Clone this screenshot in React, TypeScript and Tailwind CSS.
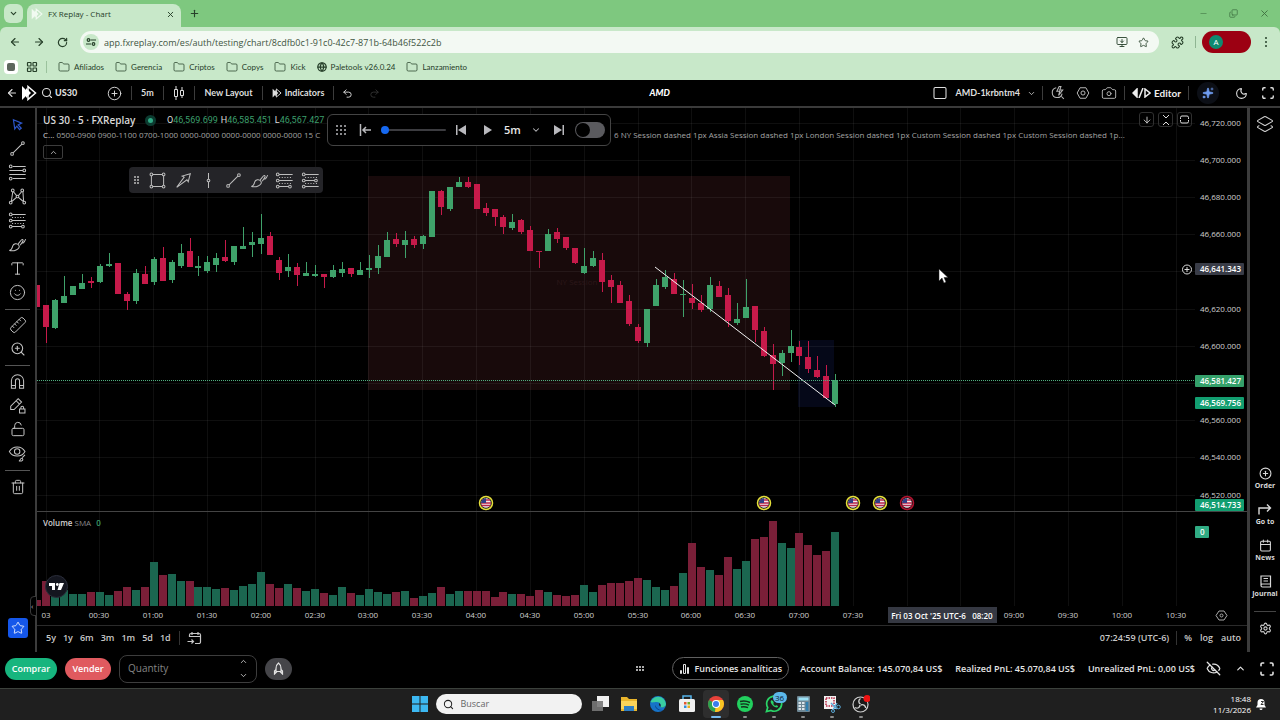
import type { ReactNode } from "react";
import {
  ArrowDown,
  ArrowLeft,
  ArrowRight,
  Calendar,
  Camera,
  ChevronDown,
  ChevronUp,
  CirclePlus,
  EyeOff,
  Folder,
  Globe,
  Layers2,
  LayoutGrid,
  LockOpen,
  Minus,
  Moon,
  MonitorDown,
  Plus,
  Puzzle,
  Redo2,
  RotateCw,
  Ruler,
  Scan,
  Search,
  Settings,
  Smile,
  Sparkles,
  Square,
  Star,
  Trash2,
  Type,
  Undo2,
  X,
  ZoomIn,
  Copy,
} from "lucide-react";

type Side = "g" | "r";
// side, high, body top, body bottom, low, top of the volume bar
type Candle = [Side, number, number, number, number, number];

const CANDLES: Candle[] = [
  ["r", 285, 285, 307, 307, 600],
  ["r", 305, 305, 327, 343, 581],
  ["g", 299, 300, 328, 329, 588],
  ["g", 276, 296, 303, 303, 590],
  ["g", 286, 286, 295, 295, 594],
  ["g", 274, 283, 289, 289, 594],
  ["r", 277, 281, 283, 288, 592],
  ["g", 264, 266, 282, 283, 592],
  ["g", 253, 264, 266, 267, 595],
  ["r", 263, 263, 294, 294, 591],
  ["r", 292, 294, 301, 310, 587],
  ["g", 269, 273, 301, 304, 590],
  ["r", 266, 274, 284, 284, 587],
  ["g", 257, 259, 282, 285, 562],
  ["r", 247, 258, 281, 281, 575],
  ["g", 260, 262, 280, 283, 574],
  ["g", 244, 253, 266, 268, 581],
  ["r", 238, 251, 267, 267, 581],
  ["g", 256, 266, 268, 276, 587],
  ["g", 256, 262, 271, 273, 587],
  ["g", 253, 258, 265, 272, 589],
  ["r", 240, 257, 261, 262, 588],
  ["g", 246, 246, 262, 265, 590],
  ["g", 227, 246, 249, 249, 586],
  ["g", 232, 242, 245, 257, 584],
  ["g", 214, 238, 244, 254, 572],
  ["r", 232, 236, 255, 255, 584],
  ["r", 257, 260, 273, 280, 588],
  ["g", 254, 267, 271, 277, 584],
  ["r", 263, 267, 275, 286, 588],
  ["g", 262, 273, 276, 276, 591],
  ["g", 265, 274, 276, 277, 589],
  ["r", 274, 274, 277, 288, 593],
  ["g", 265, 270, 277, 278, 595],
  ["g", 262, 269, 273, 277, 587],
  ["r", 268, 268, 274, 277, 593],
  ["g", 262, 270, 275, 275, 595],
  ["g", 255, 268, 270, 278, 589],
  ["g", 245, 256, 268, 274, 592],
  ["g", 232, 240, 257, 257, 594],
  ["r", 233, 239, 244, 247, 592],
  ["g", 231, 240, 245, 258, 591],
  ["r", 236, 239, 245, 248, 598],
  ["g", 235, 236, 244, 249, 596],
  ["g", 191, 191, 237, 237, 593],
  ["r", 190, 191, 207, 215, 587],
  ["g", 187, 187, 209, 211, 594],
  ["g", 177, 182, 187, 187, 591],
  ["r", 177, 182, 187, 188, 591],
  ["r", 184, 184, 209, 209, 591],
  ["r", 203, 208, 213, 216, 591],
  ["r", 209, 209, 217, 226, 597],
  ["r", 215, 217, 227, 234, 592],
  ["g", 214, 222, 228, 230, 594],
  ["r", 219, 220, 232, 234, 594],
  ["r", 226, 230, 251, 251, 596],
  ["r", 251, 251, 252, 268, 590],
  ["g", 229, 234, 251, 251, 592],
  ["r", 228, 232, 239, 243, 595],
  ["r", 237, 237, 248, 250, 596],
  ["r", 248, 248, 263, 264, 595],
  ["g", 248, 266, 273, 274, 585],
  ["g", 251, 258, 266, 267, 592],
  ["r", 253, 260, 282, 292, 585],
  ["r", 275, 280, 287, 303, 583],
  ["r", 281, 285, 303, 303, 583],
  ["r", 295, 301, 324, 326, 581],
  ["r", 324, 327, 341, 343, 578],
  ["g", 309, 309, 343, 347, 580],
  ["g", 279, 285, 306, 306, 587],
  ["g", 270, 277, 287, 289, 590],
  ["r", 273, 279, 294, 294, 586],
  ["g", 280, 294, 295, 317, 573],
  ["r", 284, 298, 303, 309, 543],
  ["r", 295, 303, 310, 312, 567],
  ["g", 277, 285, 309, 312, 570],
  ["r", 281, 286, 297, 297, 575],
  ["r", 288, 295, 321, 327, 557],
  ["g", 303, 319, 323, 325, 569],
  ["g", 279, 307, 318, 318, 561],
  ["r", 306, 306, 330, 342, 539],
  ["r", 327, 331, 356, 357, 537],
  ["r", 344, 355, 364, 390, 521],
  ["g", 350, 353, 363, 376, 543],
  ["g", 330, 346, 353, 362, 548],
  ["r", 341, 347, 356, 365, 533],
  ["r", 341, 357, 369, 373, 545],
  ["r", 356, 370, 377, 378, 555],
  ["r", 365, 376, 398, 399, 551],
  ["g", 374, 380, 404, 407, 532],
];

const STEP = 8.97;
// an empty label keeps its grid line: a badge sits over it
const TIMES = [
  "03", "00:30", "01:00", "01:30", "02:00", "02:30", "03:00", "03:30", "04:00", "04:30", "05:00",
  "05:30", "06:00", "06:30", "07:00", "07:30", "", "", "09:00", "09:30", "10:00", "10:30",
];
const PRICES = [
  "46,720.000", "46,700.000", "46,680.000", "46,660.000", "", "46,620.000", "46,600.000", "",
  "46,560.000", "46,540.000", "46,520.000",
];
const EVENTS: [number, string][] = [
  [486, "#e6e03a"],
  [764, "#e6e03a"],
  [853, "#e6e03a"],
  [880, "#e6e03a"],
  [907, "#b3122f"],
];

const priceY = (i: number) => Math.floor(123 + i * 37.2);
const timeX = (i: number) => Math.floor(46 + i * STEP * 6);

/* ---------- icons ---------- */

function ToolIcon({ children, size = 19 }: { children: ReactNode; size?: number }) {
  return (
    <svg width={size} height={size} viewBox="0 0 28 28" fill="none" stroke="currentColor" strokeWidth="1.5">
      {children}
    </svg>
  );
}

const CursorIcon = () => (
  <ToolIcon>
    <path d="M8 7l12 5-5 2.500 4.500 5-2.500 2-4-5-3 4z" strokeWidth="1.800" />
  </ToolIcon>
);
const TrendIcon = () => (
  <ToolIcon>
    <path d="M7.500 20.500l13-13" />
    <circle cx="6" cy="22" r="2" />
    <circle cx="22" cy="6" r="2" />
  </ToolIcon>
);
const FibIcon = () => (
  <ToolIcon>
    <path d="M7 5h19M2 11h20M2 17h24M7 23h19" />
    <circle cx="4" cy="5" r="2" />
    <circle cx="24" cy="11" r="2" />
    <circle cx="4" cy="23" r="2" />
  </ToolIcon>
);
const PatternIcon = () => (
  <ToolIcon>
    <path d="M7 7l-2 14M8 7l5 6M15 13l5-6M22 7l1 14M6 21l7-6M15 15l7 6" />
    <circle cx="7" cy="5" r="2" />
    <circle cx="21" cy="5" r="2" />
    <circle cx="14" cy="14" r="2" />
    <circle cx="4" cy="23" r="2" />
    <circle cx="24" cy="23" r="2" />
  </ToolIcon>
);
const PositionIcon = ({ short }: { short?: boolean }) => (
  <ToolIcon>
    <path d={short ? "M6 5h20M6 14h14M6 23h20" : "M6 5h20M6 14h20M6 23h14"} />
    <path d="M6 9.500h20M6 18.500h20" strokeDasharray="1.500 2.500" />
    <circle cx="4" cy="5" r="2" />
    <circle cx="4" cy="14" r="2" />
    <circle cx="22" cy={short ? 14 : 23} r="2" />
    <circle cx="4" cy="23" r="2" />
  </ToolIcon>
);
const BrushIcon = () => (
  <ToolIcon>
    <path d="M2 23c4-1 4-3 5-7 1-3 6-5 9-1 2 3-1 6-4 7-3 1.500-7 1.500-10 1z" />
    <path d="M15 13l5-6c1-1.500 3 .5 2 2l-4 6M20 11c2 2 4 0 6-5" />
  </ToolIcon>
);
const RectIcon = () => (
  <ToolIcon>
    <path d="M7 5h14M7 23h14M5 7v14M23 7v14" />
    <circle cx="5" cy="5" r="2" />
    <circle cx="23" cy="5" r="2" />
    <circle cx="5" cy="23" r="2" />
    <circle cx="23" cy="23" r="2" />
  </ToolIcon>
);
const ArrowMarkIcon = () => (
  <ToolIcon>
    <path d="M4 24L15 9l-3-1.500L24 4l-3 12-2-3z" />
  </ToolIcon>
);
const VerticalIcon = () => (
  <ToolIcon>
    <path d="M14 3v9M14 16v9" />
    <circle cx="14" cy="14" r="2" />
  </ToolIcon>
);
const MagnetIcon = () => (
  <ToolIcon>
    <path d="M5 24V13a9 9 0 0 1 18 0v11h-6V13a3 3 0 0 0-6 0v11zM5 20h6M17 20h6" />
  </ToolIcon>
);
const PencilLockIcon = () => (
  <ToolIcon>
    <path d="M4 20v-5L15 4l5 5-11 11zM12 7l5 5" />
    <path d="M17 19h8v6h-8zM19 19v-2a2 2 0 0 1 4 0v2" />
  </ToolIcon>
);
const EyeBrushIcon = () => (
  <ToolIcon>
    <path d="M2 11c5-9 18-9 23 0-5 9-18 9-23 0z" />
    <circle cx="13.500" cy="11" r="4" />
    <path d="M16 25c2 0 2-4 4-4s3 3 0 4zM21 20l4-4" />
  </ToolIcon>
);
const GoToDateIcon = () => (
  <svg width="15" height="15" viewBox="0 0 15 15" fill="none" stroke="currentColor" strokeWidth="1.200">
    <path d="M2.500 6V4a1.500 1.500 0 0 1 1.500-1.500h8A1.500 1.500 0 0 1 13.500 4v7a1.500 1.500 0 0 1-1.500 1.500H8M2.500 5.500h11M5 1v3M11 1v3M.5 10.500h6M4.500 8.500l2 2-2 2" />
  </svg>
);
const RocketIcon = () => (
  <svg width="11" height="13" viewBox="0 0 11 13" fill="none" stroke="currentColor" strokeWidth="1.200">
    <path d="M5.500 1C3.500 2.500 3 4.500 3 6.500V9.500h5v-3C8 4.500 7.500 2.500 5.500 1zM3 7.500L1.500 9v3L4 9.500M8 7.500L9.500 9v3L7 9.500" />
  </svg>
);
const NotesIcon = () => (
  <svg width="13" height="13" viewBox="0 0 13 13" fill="none" stroke="currentColor" strokeWidth="1.200">
    <path d="M2 1h9.500v11H3.500A1.500 1.500 0 0 1 2 10.500zM2 10.500A1.500 1.500 0 0 1 3.500 9h8M4.500 3.500h4.500M4.500 6h4.500" />
  </svg>
);
const GoToIcon = () => (
  <svg width="14" height="13" viewBox="0 0 14 13" fill="none" stroke="currentColor" strokeWidth="1.400">
    <path d="M1 11.500V5h11.500M9 1.500L12.500 5 9 8.500" />
  </svg>
);
const BarsIcon = () => (
  <svg width="11" height="10" viewBox="0 0 11 10" fill="none" stroke="currentColor">
    <path d="M1.500 6.500h1v3h-1zM4.500 .5h2v9h-2zM8.500 3.500h1v6h-1z" />
  </svg>
);
const TwoCandlesIcon = () => (
  <svg width="12" height="14" viewBox="0 0 12 14" fill="none" stroke="currentColor">
    <path d="M3 0v3M3 11v3M9 1v3M9 10v2M1.500 3.500h3v7h-3zM7.500 4.500h3v5h-3z" />
  </svg>
);
const ReplayLogo = ({ size }: { size: number }) => (
  <svg width={size} height={size} viewBox="0 0 16 16">
    <path d="M1 1l7 7-7 7z" fill="currentColor" />
    <path d="M7 1.500L14.500 8 7 14.500V9l1-1-1-1z" fill="none" stroke="currentColor" strokeWidth="1.500" />
    <path d="M5 3l5 5-5 5z" fill="currentColor" />
  </svg>
);
const Grip = ({ cols, rows, gap, className }: { cols: number; rows: number; gap: number; className?: string }) => (
  <svg width={(cols - 1) * gap + 2} height={(rows - 1) * gap + 2} className={className} fill="currentColor">
    {Array.from({ length: cols * rows }, (_, i) => (
      <rect key={i} x={(i % cols) * gap} y={Math.floor(i / cols) * gap} width="2" height="2" rx="1" />
    ))}
  </svg>
);
const HexDot = ({ size }: { size: number }) => (
  <svg width={size} height={size} viewBox="0 0 24 24" fill="none" stroke="currentColor" strokeWidth="1.700">
    <path d="M7 3h10l5 9-5 9H7l-5-9z" />
    <circle cx="12" cy="12" r="3.500" />
  </svg>
);

/* ---------- browser ---------- */

function Bookmark({ name, globe }: { name: string; globe?: boolean }) {
  return (
    <a href="#" className="flex items-center gap-[4px]">
      {globe ? <Globe size={10} strokeWidth={3} /> : <Folder size={12} strokeWidth={1.5} />}
      {name}
    </a>
  );
}

function Browser() {
  return (
    <header className="bg-[#7ec87f] text-[#27402a]">
      <div className="flex h-[27px] items-end">
        <button aria-label="Search tabs" className="mb-[4px] ml-[4px] flex h-[19px] w-[19px] items-center justify-center rounded-md bg-[#c8e8c9]">
          <ChevronDown size={9} strokeWidth={3} />
        </button>
        <div className="ml-1 flex h-[23px] w-[154px] items-center rounded-t-lg bg-[#c8e8c9] pr-[6px] pb-[3px] pl-[4px]">
          <span className="text-[#f1faf1]">
            <ReplayLogo size={12} />
          </span>
          <span className="ml-[5px] flex-1 text-[8px]">FX Replay - Chart</span>
          <button aria-label="Close tab">
            <X size={9} strokeWidth={2.5} />
          </button>
        </div>
        <button aria-label="New tab" className="mb-[8px] ml-[8px]">
          <Plus size={11} strokeWidth={2.5} />
        </button>
        <div className="mb-[8px] ml-auto flex gap-[21px] pr-[10px] text-[#3f7041]">
          <button aria-label="Minimize"><Minus size={9} strokeWidth={1.5} /></button>
          <button aria-label="Restore"><Copy size={9} strokeWidth={2} className="-scale-x-100 rotate-180" /></button>
          <button aria-label="Close"><X size={11} strokeWidth={2} /></button>
        </div>
      </div>

      <div className="rounded-t-md bg-[#c8e8c9]">
        <div className="flex h-[30px] items-center">
          <div className="flex w-[80px] items-center gap-[12px] pl-[9px]">
            <button aria-label="Back"><ArrowLeft size={12} strokeWidth={2.3} /></button>
            <button aria-label="Forward"><ArrowRight size={12} strokeWidth={2.3} /></button>
            <button aria-label="Reload"><RotateCw size={11} strokeWidth={2.6} /></button>
          </div>
          <div className="flex h-[22px] flex-1 items-center rounded-full bg-[#f3f9f3] pr-[10px] pl-[3px]">
            <span className="flex h-4 w-4 items-center justify-center rounded-full bg-[#c8e8c9]">
              <svg width="10" height="8" viewBox="0 0 10 8" fill="none" stroke="currentColor" strokeWidth="1.200">
                <path d="M4.500 2H10M0 6h5" />
                <circle cx="2.500" cy="2" r="1.300" />
                <circle cx="7.500" cy="6" r="1.300" />
              </svg>
            </span>
            <input
              aria-label="Address"
              defaultValue="app.fxreplay.com/es/auth/testing/chart/8cdfb0c1-91c0-42c7-871b-64b46f522c2b"
              className="ml-[5px] h-full flex-1 bg-transparent text-[9px] text-[#3f5542] outline-none"
            />
            <MonitorDown size={12} strokeWidth={1.8} />
            <Star size={11} strokeWidth={1.8} className="ml-[10px]" />
          </div>
          <Puzzle size={13} strokeWidth={2} className="ml-[12px]" />
          <span className="ml-[11px] h-3 w-px bg-[#8fb592]" />
          <button aria-label="Profile" className="ml-[6px] flex h-[22px] w-[49px] items-center rounded-full bg-[#9c0012] pl-[7px]">
            <span className="flex h-[14px] w-[14px] items-center justify-center rounded-full bg-[#0f8a70] text-[8px] text-white">A</span>
          </button>
          <button aria-label="Menu" className="mr-[13px] ml-[14px]">
            <Grip cols={1} rows={3} gap={4} />
          </button>
        </div>
        <nav className="flex h-[23px] items-center gap-[11px] pb-[4px] pl-[4px] font-[Lato,'Open_Sans',sans-serif] text-[8px]">
          <span className="flex h-[14px] w-[14px] items-center justify-center rounded bg-white">
            <span className="h-2 w-2 rounded-[2px] bg-[#5c665d]" />
          </span>
          <LayoutGrid size={12} strokeWidth={2.4} className="-ml-[3px]" />
          <span className="-ml-[3px] h-3 w-px bg-[#9bc29d]" />
          <Bookmark name="Afiliados" />
          <Bookmark name="Gerencia" />
          <Bookmark name="Criptos" />
          <Bookmark name="Copys" />
          <Bookmark name="Kick" />
          <Bookmark name="Paletools v26.0.24" globe />
          <Bookmark name="Lanzamiento" />
        </nav>
      </div>
    </header>
  );
}

/* ---------- app top bar ---------- */

const Divider = ({ className = "bg-[#3c3c3c]" }: { className?: string }) => (
  <span className={`h-[14px] w-px shrink-0 ${className}`} />
);

function TopBar() {
  return (
    <div className="flex h-[28px] shrink-0 items-center border-b-2 border-[#3a3a3a] font-[Lato,'Open_Sans',sans-serif] text-[9px] font-bold text-[#dedede]">
      <div className="flex w-[131px] items-center pr-[9px] pl-[6px]">
        <button aria-label="Back"><ArrowLeft size={12} strokeWidth={2.2} /></button>
        <span className="ml-[3px] text-white"><ReplayLogo size={16} /></span>
        <button className="ml-[4px] flex items-center gap-[2px] font-black">
          <Search size={12} strokeWidth={2.2} />
          US30
        </button>
        <button aria-label="Compare" className="ml-auto"><CirclePlus size={15} strokeWidth={1.5} /></button>
      </div>
      <Divider />
      <button className="w-[31px]">5m</button>
      <Divider />
      <button aria-label="Chart type" className="flex w-[30px] justify-center"><TwoCandlesIcon /></button>
      <Divider />
      <button className="w-[67px]">New Layout</button>
      <Divider />
      <button className="flex w-[70px] items-center justify-center gap-[3px]">
        <ReplayLogo size={10} />
        Indicators
      </button>
      <Divider />
      <button aria-label="Undo" className="flex w-[27px] justify-center"><Undo2 size={11} /></button>
      <button aria-label="Redo" className="flex w-[26px] justify-center text-[#333]"><Redo2 size={11} /></button>

      <span className="flex-1 text-center font-black text-white italic">AMD</span>

      <button className="flex items-center gap-[7px] pr-[6px]">
        <Square size={16} strokeWidth={1.6} className="scale-y-90" />
        AMD-1krbntm4
        <ChevronDown size={9} />
      </button>
      <Divider />
      <div className="flex w-[81px] items-center justify-center gap-[11px] text-[#b8b8b8]">
        <button aria-label="Quick search">
          <svg width="14" height="14" viewBox="0 0 24 24" fill="none" stroke="currentColor" strokeWidth="1.800">
            <path d="M9 3a8.500 8.500 0 1 0 10 10M18 18l4 4M14 1l-4 8h5l-2 7 7-9h-5l2-6z" />
          </svg>
        </button>
        <button aria-label="Chart settings"><HexDot size={14} /></button>
        <button aria-label="Snapshot"><Camera size={16} strokeWidth={1.4} /></button>
      </div>
      <Divider />
      <button className="flex w-[63px] items-center justify-center gap-[3px] text-[10px] text-[#eee]">
        <svg width="19" height="10" viewBox="0 0 19 10" fill="none" stroke="currentColor" strokeWidth="1.500">
          <path d="M5 1v8L1 5z" fill="currentColor" />
          <path d="M11 0L7 10M13 1v8l5-4z" />
        </svg>
        Editor
      </button>
      <Divider />
      <div className="flex w-[91px] items-center pl-[8px]">
        <button aria-label="Assistant" className="flex h-[22px] w-[22px] items-center justify-center rounded-full bg-[#0c0f16] text-[#6f9cf0]">
          <Sparkles size={12} fill="currentColor" strokeWidth={1.5} />
        </button>
        <button aria-label="Theme" className="ml-[16px]"><Moon size={13} strokeWidth={2} /></button>
        <button aria-label="Fullscreen" className="ml-[13px]"><Scan size={14} strokeWidth={2.4} /></button>
      </div>
    </div>
  );
}

/* ---------- side rails ---------- */

function Tool({ label, children, active }: { label: string; children: ReactNode; active?: boolean }) {
  return (
    <button
      aria-label={label}
      className={`flex h-6 w-full items-center justify-center ${active ? "text-[#2c55c8]" : "text-[#c4c4c4]"}`}
    >
      {children}
    </button>
  );
}

function LeftRail() {
  return (
    <aside className="relative flex w-[35px] shrink-0 flex-col items-center pt-[4px]">
      <Tool label="Cursor" active><CursorIcon /></Tool>
      <Tool label="Trend line"><TrendIcon /></Tool>
      <Tool label="Fibonacci"><FibIcon /></Tool>
      <Tool label="Patterns"><PatternIcon /></Tool>
      <Tool label="Positions"><PositionIcon /></Tool>
      <Tool label="Brush"><BrushIcon /></Tool>
      <Tool label="Text"><Type size={17} strokeWidth={1.4} /></Tool>
      <Tool label="Emoji"><Smile size={17} strokeWidth={1.4} /></Tool>
      <span className="mt-[5px] mb-[3px] h-px w-[25px] bg-[#555]" />
      <Tool label="Measure"><Ruler size={18} strokeWidth={1.3} className="-scale-x-100" /></Tool>
      <Tool label="Zoom"><ZoomIn size={16} strokeWidth={1.6} /></Tool>
      <span className="mt-[4px] mb-[3px] h-px w-[25px] bg-[#555]" />
      <Tool label="Magnet"><MagnetIcon /></Tool>
      <Tool label="Keep drawing"><PencilLockIcon /></Tool>
      <Tool label="Lock"><LockOpen size={16} strokeWidth={1.5} /></Tool>
      <Tool label="Hide"><EyeBrushIcon /></Tool>
      <span className="mt-[5px] mb-[4px] h-px w-[25px] bg-[#555]" />
      <Tool label="Delete"><Trash2 size={16} strokeWidth={1.5} /></Tool>
      <button aria-label="Favorites" className="mt-auto mb-[14px] flex h-5 w-5 items-center justify-center rounded-[3px] bg-[#1557ea] text-white">
        <Star size={14} strokeWidth={1.4} />
      </button>
      <button aria-label="Collapse" className="absolute top-[488px] right-[-2px] flex h-5 w-[7px] items-center rounded-l border border-[#3a3a3a] bg-black text-[8px] text-[#bbb]">
        ‹
      </button>
    </aside>
  );
}

function RailItem({ label, children }: { label: string; children: ReactNode }) {
  return (
    <button className="flex h-9 flex-col items-center gap-px text-[7px] leading-[10px] font-bold text-[#d8d8d8]">
      {children}
      {label}
    </button>
  );
}

function RightRail() {
  return (
    <aside className="flex w-[30px] shrink-0 flex-col items-center text-[#d0d0d0]">
      <button aria-label="Layers" className="mt-[7px]"><Layers2 size={18} strokeWidth={1.4} /></button>
      <div className="mt-auto flex flex-col items-center">
        <RailItem label="Order"><CirclePlus size={13} /></RailItem>
        <RailItem label="Go to"><GoToIcon /></RailItem>
        <RailItem label="News"><Calendar size={13} /></RailItem>
        <RailItem label="Journal"><NotesIcon /></RailItem>
      </div>
      <span className="h-px w-[22px] bg-[#444]" />
      <button aria-label="Settings" className="mt-[10px] mb-[17px]"><Settings size={13} /></button>
    </aside>
  );
}

/* ---------- chart ---------- */

function Flag({ x, ring }: { x: number; ring: string }) {
  return (
    <g transform={`translate(${x} 503)`}>
      <circle r="6.500" fill="#111" stroke={ring} strokeWidth="1.500" />
      <circle r="4.800" fill="#f2e9ee" />
      <path d="M-4 -3h8M-5 0h10M-4.500 2.500h9" stroke="#b8254a" strokeWidth="1.300" />
      <path d="M-4.800 0A4.800 4.800 0 0 1 0 -4.800V0z" fill="#2f3f86" />
    </g>
  );
}

function Plot() {
  return (
    <svg className="h-[517px] min-w-0 flex-1" aria-label="US 30 five minute chart">
      {/* all coordinates below are window ones */}
      <g transform="translate(-37 -108)">
        <g shapeRendering="crispEdges">
          <rect x="368" y="176" width="422" height="214" fill="#180a0b" />
          <rect x="798" y="340" width="36" height="67" fill="#050818" />
          {PRICES.map((_, i) => (
            <rect key={i} x="37" y={priceY(i)} width="100%" height="1" fill="#fff" opacity="0.060" />
          ))}
          {TIMES.map((_, i) => (
            <rect key={i} x={timeX(i)} y="108" width="1" height="498" fill="#fff" opacity="0.060" />
          ))}
        </g>
        <text x="577" y="285" textAnchor="middle" fontSize="8" fill="#2c1719">NY Session</text>

        <g shapeRendering="crispEdges">
          {CANDLES.map(([side, high, top, bottom, low, vol], i) => {
            const x = Math.round(46 + (i - 1) * STEP);
            return (
              <g key={i}>
                <rect x={x - 4} y={vol} width="8" height={606 - vol} fill={side === "g" ? "#1b6650" : "#7a1f38"} />
                <g fill={side === "g" ? "#3fa26a" : "#c61a4a"}>
                  <rect x={x} y={high} width="1" height={low - high} />
                  <rect x={x - 3} y={top} width="6" height={bottom - top} />
                </g>
              </g>
            );
          })}
        </g>
        <path d="M655 267L835 405" stroke="#f2f2f2" strokeWidth="1" />
        <path d="M37 380.500h1200" stroke="#4fae7e" strokeDasharray="1 1" />
        <rect x="37" y="511" width="100%" height="1" fill="#444" />
        {EVENTS.map(([x, ring]) => (
          <Flag key={x} x={x} ring={ring} />
        ))}
        <circle cx="56.500" cy="586.500" r="11" fill="#14161f" stroke="#2a2d3a" />
        <path d="M49 583h6v7h-3v-4h-3zM59.500 583h4.500l-3 7h-3.500z" fill="#fff" />
        <circle cx="57.300" cy="584.500" r="1.400" fill="#fff" />

        <g fontSize="8" fill="#d0d0d0" textAnchor="middle">
          {TIMES.map((t, i) => t && <text key={t} x={timeX(i)} y="618">{t}</text>)}
        </g>
        <rect x="888" y="607" width="109" height="16" fill="#353842" />
        <text x="942" y="619" textAnchor="middle" fontSize="8" fontWeight="600" fill="#fff" xmlSpace="preserve">
          {"Fri 03 Oct '25 UTC-6   08:20"}
        </text>
        <path d="M939 269v12l3-3 2 5 2-1-2-4.500h4z" fill="#fff" stroke="#222" strokeWidth=".5" />
      </g>
    </svg>
  );
}

function PriceTag({ y, text, fill, width = 49 }: { y: number; text: string; fill: string; width?: number }) {
  return (
    <g>
      <rect x="0" y={y - 6} width={width} height="12" rx="1" fill={fill} />
      <text x={5} y={y + 3} fill="#fff" fontWeight="600">{text}</text>
    </g>
  );
}

function PriceAxis() {
  return (
    <svg className="h-[517px] w-[52px] shrink-0 overflow-visible" fontSize="8">
      <g transform="translate(0 -108)">
        {PRICES.map((p, i) => p && <text key={p} x="5" y={priceY(i) + 3} fill="#d0d0d0">{p}</text>)}
        <circle cx="-8" cy="269.500" r="4.500" fill="none" stroke="#ddd" />
        <path d="M-10.500 269.500h5M-8 267v5" stroke="#ddd" />
        <PriceTag y={269} text="46,641.343" fill="#393c47" />
        <PriceTag y={381} text="46,581.427" fill="#34a06a" />
        <PriceTag y={403} text="46,569.756" fill="#129e70" />
        <rect x="0" y="511" width="52" height="1" fill="#444" />
        <PriceTag y={505} text="46,514.733" fill="#129e70" />
        <PriceTag y={532} text="0" fill="#30ac84" width={14} />
        <g transform="translate(21 610)" fill="none" stroke="#aaa">
          <path d="M3 1h5l3 4.500L8 10H3L0 5.500z" />
          <circle cx="5.500" cy="5.500" r="1.500" />
        </g>
      </g>
    </svg>
  );
}

const Ohlc = ({ k, v }: { k: string; v?: string }) => (
  <span className="text-[#dcdcdc]">
    {k}
    <span className="text-[#3c9f6c]">{v}</span>
  </span>
);

function Legend() {
  return (
    <div className="absolute top-[5px] left-[6px] text-[#d8d8d8]">
      <div className="flex h-[14px] items-center whitespace-nowrap">
        <h1 className="w-[102px] text-[10px] font-semibold">US 30 · 5 · FXReplay</h1>
        <span className="mr-[11px] flex h-[11px] w-[11px] items-center justify-center rounded-full bg-[#0c3b30]">
          <span className="h-[5px] w-[5px] rounded-full bg-[#2fa883]" />
        </span>
        <div className="flex gap-[3px] pt-px font-[Roboto,sans-serif] text-[9px]">
          <Ohlc k="O" v="46,569.699" />
          <Ohlc k="H" v="46,585.451" />
          <Ohlc k="L" v="46,567.427" />
        </div>
      </div>
      <div className="mt-px flex h-[14px] items-center text-[8px] whitespace-nowrap text-[#a4a4a4]">
        <span className="w-[571px]">
          <span className="text-[#d8d8d8]">C...</span> 0500-0900 0900-1100 0700-1000 0000-0000 0000-0000 0000-0000 15 C
        </span>
        <span>
          6 NY Session dashed 1px Assia Session dashed 1px London Session dashed 1px Custom Session dashed 1px Custom
          Session dashed 1p...
        </span>
      </div>
      <button aria-label="Collapse legend" className="mt-[3px] flex h-[14px] w-[20px] items-center justify-center rounded-[2px] border border-[#3c3c3c]">
        <ChevronUp size={9} />
      </button>
    </div>
  );
}

function ReplayBar() {
  return (
    <div className="absolute top-[6px] left-[290px] flex h-[32px] w-[284px] items-center rounded-md border border-[#444] bg-black text-[#b9b9bd]">
      <Grip cols={3} rows={3} gap={4} className="ml-[8px]" />
      <button aria-label="Reset" className="ml-[13px]">
        <svg width="12" height="12" viewBox="0 0 12 12" fill="none" stroke="currentColor" strokeWidth="1.500">
          <path d="M1.500 0v12M12 6H4M7 3L4 6l3 3" />
        </svg>
      </button>
      <input
        type="range"
        aria-label="Replay speed"
        defaultValue={0}
        className="ml-[10px] h-[9px] w-[65px] appearance-none bg-transparent [&::-webkit-slider-runnable-track]:h-[2px] [&::-webkit-slider-runnable-track]:rounded [&::-webkit-slider-runnable-track]:bg-[#3c3c40] [&::-webkit-slider-thumb]:-mt-[3px] [&::-webkit-slider-thumb]:h-[8px] [&::-webkit-slider-thumb]:w-[8px] [&::-webkit-slider-thumb]:appearance-none [&::-webkit-slider-thumb]:rounded-full [&::-webkit-slider-thumb]:bg-[#1668f0]"
      />
      <button aria-label="Step back" className="ml-[10px]">
        <svg width="10" height="10" viewBox="0 0 10 10" fill="currentColor"><path d="M0 0h1.500v10H0zM10 0v10L2 5z" /></svg>
      </button>
      <button aria-label="Play" className="ml-[18px]">
        <svg width="8" height="10" viewBox="0 0 8 10" fill="currentColor"><path d="M0 0v10l8-5z" /></svg>
      </button>
      <select aria-label="Interval" className="ml-[12px] appearance-none text-[11px] font-semibold text-[#e8e8e8]">
        <option>5m</option>
      </select>
      <ChevronDown size={10} strokeWidth={2.5} className="ml-[10px]" />
      <button aria-label="Step forward" className="ml-[13px]">
        <svg width="10" height="10" viewBox="0 0 10 10" fill="currentColor"><path d="M8.500 0H10v10H8.500zM0 0v10l8-5z" /></svg>
      </button>
      <input
        type="checkbox"
        aria-label="Replay mode"
        className="mr-[5px] ml-auto h-4 w-[30px] appearance-none rounded-full bg-[#5a5a5e] p-px before:block before:h-[14px] before:w-[14px] before:rounded-full before:bg-black"
      />
    </div>
  );
}

function DrawingBar() {
  return (
    <div className="absolute top-[59px] left-[92px] flex h-[26px] w-[194px] items-center rounded bg-[#242428] pl-[5px] text-[#bdbdbd]">
      <Grip cols={2} rows={3} gap={3} className="mr-[6px]" />
      {[
        <RectIcon />,
        <ArrowMarkIcon />,
        <VerticalIcon />,
        <TrendIcon />,
        <BrushIcon />,
        <PositionIcon />,
        <PositionIcon short />,
      ].map((icon, i) => (
        <button key={i} aria-label={`Favorite tool ${i + 1}`} className="flex flex-1 justify-center">
          {icon}
        </button>
      ))}
    </div>
  );
}

function PaneButton({ label, children }: { label: string; children: ReactNode }) {
  return (
    <button aria-label={label} className="flex h-[15px] w-[15px] items-center justify-center rounded-[3px] border border-[#303030] text-[#ddd]">
      {children}
    </button>
  );
}

function ChartArea() {
  return (
    <section className="flex min-w-0 flex-1 flex-col border-r-3 border-l-2 border-[#3c3c3c]">
      <div className="relative flex overflow-hidden border-b border-[#2b2b2b]">
        <Plot />
        <PriceAxis />
        <Legend />
        <DrawingBar />
        <ReplayBar />
        <div className="absolute top-[4px] right-[55px] flex gap-[4px]">
          <PaneButton label="Move pane down"><ArrowDown size={10} /></PaneButton>
          <PaneButton label="Collapse pane">
            <svg width="8" height="10" viewBox="0 0 8 10" fill="none" stroke="currentColor"><path d="M1 0l3 3 3-3M1 10l3-3 3 3" /></svg>
          </PaneButton>
          <PaneButton label="Maximize pane">
            <svg width="9" height="9" viewBox="0 0 9 9" fill="none" stroke="currentColor">
              <path d="M.5 4V2.500a1.500 1.500 0 0 1 1.500-1.500h5a1.500 1.500 0 0 1 1.500 1.500V4M.5 5v1.500A1.500 1.500 0 0 0 2 8h5a1.500 1.500 0 0 0 1.500-1.500V5" />
            </svg>
          </PaneButton>
        </div>
        <p className="absolute top-[409px] left-[6px] text-[8px] leading-[12px] font-semibold text-[#d0d0d0]">
          Volume <span className="font-normal text-[#8a8a8a]">SMA</span>
          <span className="ml-[5px] text-[#3c9f6c]">0</span>
        </p>
      </div>
      <div className="flex flex-1 items-center pr-[6px] pb-[2px] pl-[9px] text-[9px] font-semibold text-[#c8c8c8]">
        <div className="flex gap-[7px]">
          {["5y", "1y", "6m", "3m", "1m", "5d", "1d"].map((r) => (
            <button key={r}>{r}</button>
          ))}
        </div>
        <Divider className="mr-[7px] ml-[8px] bg-[#333]" />
        <button aria-label="Go to date"><GoToDateIcon /></button>
        <button className="ml-auto">07:24:59 (UTC-6)</button>
        <Divider className="mx-[7px] bg-[#333]" />
        <div className="flex gap-[8px]">
          <button>%</button>
          <button>log</button>
          <button>auto</button>
        </div>
      </div>
    </section>
  );
}

/* ---------- order bar ---------- */

function OrderBar() {
  return (
    <div className="flex h-[36px] shrink-0 items-center bg-black pb-[3px] pl-[5px] text-[9px] font-semibold text-[#e4e4e4]">
      <button className="h-[22px] w-[52px] rounded-full bg-[#17b57e] text-white">Comprar</button>
      <button className="ml-[8px] h-[22px] w-[46px] rounded-full bg-[#e05a5f] text-white">Vender</button>
      <div className="ml-[8px] flex h-[28px] w-[138px] items-center rounded-lg border border-[#3d3d3d] px-[8px]">
        <input aria-label="Quantity" placeholder="Quantity" className="min-w-0 flex-1 bg-transparent text-[10px] font-normal outline-none placeholder:text-[#858585]" />
        <div className="flex flex-col gap-[5px]">
          <button aria-label="Increase"><ChevronUp size={9} /></button>
          <button aria-label="Decrease"><ChevronDown size={9} /></button>
        </div>
      </div>
      <button aria-label="Quick order" className="ml-[8px] flex h-[22px] w-[27px] items-center justify-center rounded-full bg-[#454549]">
        <RocketIcon />
      </button>
      <div className="flex flex-1 justify-center pl-[315px]">
        <Grip cols={3} rows={2} gap={3} />
      </div>
      <button className="flex h-[23px] w-[117px] items-center justify-center gap-[4px] rounded-full border border-[#606060]">
        <BarsIcon />
        Funciones analíticas
      </button>
      <div className="ml-[11px] flex gap-[13px] whitespace-nowrap">
        <span>Account Balance: 145.070,84 US$</span>
        <span>Realized PnL: 45.070,84 US$</span>
        <span>Unrealized PnL: 0,00 US$</span>
      </div>
      <button aria-label="Hide balances" className="ml-[11px]"><EyeOff size={15} /></button>
      <button aria-label="Expand" className="ml-[14px]"><ChevronUp size={11} strokeWidth={2.6} /></button>
      <button aria-label="Fullscreen" className="mr-[5px] ml-[13px]"><Scan size={16} strokeWidth={2.4} /></button>
    </div>
  );
}

/* ---------- taskbar ---------- */

function TaskIcon({ label, children, open, active }: { label: string; children: ReactNode; open?: boolean; active?: boolean }) {
  return (
    <button
      aria-label={label}
      className={`relative flex h-[28px] w-[26px] items-center justify-center rounded ${active ? "bg-[#2e2e2e]" : ""}`}
    >
      <svg width="18" height="18" viewBox="0 0 18 18">{children}</svg>
      {open && (
        <span className={`absolute bottom-0 h-[2px] rounded-full ${active ? "w-[10px] bg-[#76b9ed]" : "w-[4px] bg-[#8c8c8c]"}`} />
      )}
    </button>
  );
}

function Taskbar() {
  return (
    <footer className="flex h-[32px] shrink-0 items-center border-t border-[#3c413c] bg-[#1f1f1f] pb-px">
      <div className="flex-1" />
      <div className="flex items-center gap-[3px]">
        <TaskIcon label="Start">
          <path d="M1 1h7.500v7.500H1zM9.500 1H17v7.500H9.500zM1 9.500h7.500V17H1zM9.500 9.500H17V17H9.500z" fill="#3cb8f2" />
        </TaskIcon>
        <label className="mr-[2px] flex h-5 w-[146px] items-center gap-[7px] rounded-full bg-[#f2f2f2] pl-[7px] text-[#222]">
          <Search size={11} strokeWidth={2.2} />
          <input placeholder="Buscar" aria-label="Buscar" className="min-w-0 flex-1 bg-transparent text-[9px] outline-none placeholder:text-[#666]" />
        </label>
        <TaskIcon label="Task view">
          <rect x="6" y="1" width="12" height="11" fill="#f1f1f1" />
          <rect x="1" y="6" width="11" height="10" fill="#777" opacity=".9" />
        </TaskIcon>
        <TaskIcon label="Files">
          <path d="M1 2h6l2 2h8v12H1z" fill="#e9b52c" />
          <path d="M1 6h16v8H1z" fill="#fbd45a" />
          <path d="M4 11h10v5H4z" fill="#2f7fc4" />
        </TaskIcon>
        <TaskIcon label="Edge">
          <circle cx="9" cy="9" r="8" fill="#1673c8" />
          <path d="M1.500 7A8 8 0 0 1 17 9c0 3-3 4-6 3 2-2 0-5-3-5-3 0-5 1-6.500 0z" fill="#39cda0" />
          <path d="M6 10c0 4 4 6 8 5a8 8 0 0 1-8-5z" fill="#0d3f86" />
          <path d="M10 8c2 1 2 3 1 4 3 .5 6 0 6-3 0 5-8 4-7-1z" fill="#1f1f1f" />
        </TaskIcon>
        <TaskIcon label="Store">
          <path d="M5 4V1h8v3" fill="none" stroke="#56b4ea" strokeWidth="1.500" />
          <rect x="1" y="4" width="16" height="13" rx="1.500" fill="#f0f0f0" />
          <path d="M6 7h2.500v2.500H6z" fill="#e4572e" />
          <path d="M9.500 7H12v2.500H9.500z" fill="#6fae2b" />
          <path d="M6 10.500h2.500V13H6z" fill="#2d8fdc" />
          <path d="M9.500 10.500H12V13H9.500z" fill="#efb01e" />
        </TaskIcon>
        <TaskIcon label="Chrome" open active>
          <circle cx="9" cy="9" r="8" fill="#e8423a" />
          <path d="M9 9L2.100 5A8 8 0 0 0 8 17z" fill="#2aa350" />
          <path d="M9 9h8a8 8 0 0 1-9 8z" fill="#f9c623" />
          <path d="M9 5h7a8 8 0 0 1 1 4l-5 1z" fill="#f9c623" />
          <circle cx="9" cy="9" r="4" fill="#fff" />
          <circle cx="9" cy="9" r="3" fill="#3b7ded" />
        </TaskIcon>
        <TaskIcon label="Spotify" open>
          <circle cx="9" cy="9" r="8" fill="#22d05e" />
          <path d="M4 6.500c4-1 7-.5 10 1M4.500 9.300c3-.8 6-.4 8.500.9M5 12c3-.6 5-.3 7 .7" fill="none" stroke="#14301d" strokeWidth="1.400" />
        </TaskIcon>
        <div className="relative">
          <TaskIcon label="WhatsApp" open>
            <path d="M1.500 16.500l1.200-4A7.500 7.500 0 1 1 6 15.500z" fill="none" stroke="#29d467" strokeWidth="1.700" />
            <path d="M6 5.500c-1 1 0 3.500 2 5.300s4.500 2.200 5 .9c.3-1-1.700-2-2.200-1.300-.8 1-3-1.200-2.300-2C9.300 7.500 7.500 4.500 6 5.500z" fill="#29d467" />
          </TaskIcon>
          <span className="absolute top-[2px] right-0 flex h-[11px] w-[14px] items-center justify-center rounded-full bg-[#5cb8ea] text-[8px] leading-none text-[#10202c]">
            36
          </span>
        </div>
        <TaskIcon label="Calculator" open>
          <rect x="3" y="1" width="13" height="16" rx="1" fill="#6f8794" />
          <rect x="4.500" y="2.500" width="10" height="3" fill="#9be0f4" />
          <path d="M4.500 8h6M4.500 11h6M4.500 14h6" stroke="#dbe6ec" strokeWidth="1.800" strokeDasharray="2.500 1" />
          <path d="M13 7v9" stroke="#2f7fb0" strokeWidth="2.500" />
        </TaskIcon>
        <TaskIcon label="Snipping tool" open>
          <rect x="1" y="1" width="12" height="13" fill="#f2f2f2" />
          <rect x="3" y="3" width="8" height="8" fill="none" stroke="#b82a45" strokeWidth="1.500" strokeDasharray="1.500 1" />
          <path d="M8 8l6 6M14 8l-4 7" stroke="#5aa9d6" strokeWidth="1.500" />
          <circle cx="15.500" cy="12" r="1.800" fill="none" stroke="#5aa9d6" />
          <circle cx="10" cy="16" r="1.500" fill="none" stroke="#5aa9d6" />
        </TaskIcon>
        <TaskIcon label="OBS" open>
          <circle cx="8.500" cy="9.500" r="7.500" fill="#1a1a1a" stroke="#d0d0d0" strokeWidth="1.200" />
          <path d="M8.500 9c-2-1-2.500-4 0-5.500M9 10c2-1 4.500.5 4.700 3M8 10c0 2.500-2.500 4-5 2.500" fill="none" stroke="#d0d0d0" strokeWidth="1.400" />
          <circle cx="15" cy="3.500" r="3.500" fill="#ee1212" />
        </TaskIcon>
      </div>
      <div className="flex flex-1 items-center justify-end gap-[5px] text-[8px] text-white">
        <div className="text-right leading-[11px]">
          <div>18:48</div>
          <div>11/3/2026</div>
        </div>
        <svg width="10" height="12" viewBox="0 0 10 12" className="mr-[14px]">
          <path d="M0 9.500L1.500 7V4.500a3.500 3.500 0 0 1 7 0V7L10 9.500z" fill="#fff" />
          <path d="M3.500 10.500h3a1.500 1.500 0 0 1-3 0z" fill="#fff" />
          <path d="M5 3.500h2.500L5 6.500h2.500" fill="none" stroke="#333" />
        </svg>
      </div>
    </footer>
  );
}

export default function App() {
  return (
    <div className="flex min-h-screen flex-col bg-black font-['Open_Sans','Noto_Sans',sans-serif]">
      <Browser />
      <TopBar />
      <main className="flex flex-1">
        <LeftRail />
        <ChartArea />
        <RightRail />
      </main>
      <OrderBar />
      <Taskbar />
    </div>
  );
}
